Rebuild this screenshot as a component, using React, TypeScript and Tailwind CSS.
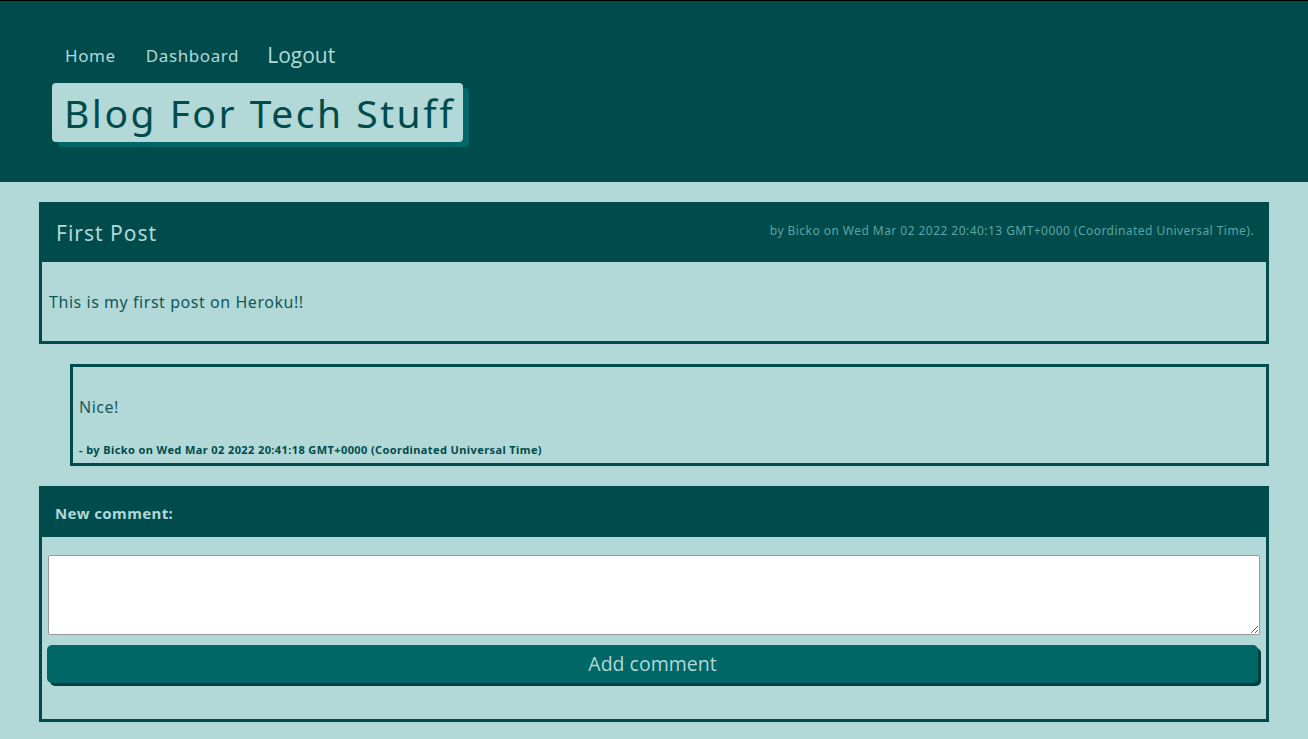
import React from "react";

const sans = "font-['Noto_Sans',sans-serif]";

function Header() {
    return (
        <header className="h-[182px] border-t border-black bg-[#004c4c] pl-[52px] pt-[40px]">
            <nav className={`flex items-end gap-[30px] pl-[13px] text-[17px] tracking-[0.6px] text-[#b2d8d8] ${sans}`}>
                <a href="#" className="leading-[27px]">Home</a>
                <a href="#" className="leading-[27px]">Dashboard</a>
                <a href="#" className="-ml-[2px] font-['Open_Sans',sans-serif] text-[21px] leading-[28px] tracking-normal">Logout</a>
            </nav>
            <div className="mt-[14px] inline-block rounded-[4px] bg-[#b2d8d8] pl-[12px] pr-[8px] shadow-[6px_5px_0_#006666]">
                <h1 className={`text-[39px] leading-[59px] tracking-[2.5px] text-[#004c4c] ${sans}`}>Blog For Tech Stuff</h1>
            </div>
        </header>
    );
}

function Post() {
    return (
        <section className="border-[3px] border-[#004c4c]">
            <div className="flex h-[57px] items-center justify-between bg-[#004c4c] pl-[14px] pr-[12px]">
                <h2 className={`text-[21px] tracking-[1px] text-[#b2d8d8] ${sans}`}>First Post</h2>
                <p className={`-mt-[6px] text-[12px] tracking-[0.45px] text-[#5fa3a3] ${sans}`}>
                    by Bicko on Wed Mar 02 2022 20:40:13 GMT+0000 (Coordinated Universal Time).
                </p>
            </div>
            <div className={`flex h-[79px] items-center px-[7px] text-[16px] tracking-[0.55px] text-[#0e5a5a] ${sans}`}>
                This is my first post on Heroku!!
            </div>
        </section>
    );
}

function Comment() {
    return (
        <div className={`ml-[31px] h-[102px] border-[3px] border-[#004c4c] px-[6px] pt-[28px] ${sans}`}>
            <p className="text-[16px] tracking-[0.5px] text-[#1d5b5b]">Nice!</p>
            <p className="mt-[23px] text-[11px] font-bold tracking-[0.4px] text-[#004c4c]">
                - by Bicko on Wed Mar 02 2022 20:41:18 GMT+0000 (Coordinated Universal Time)
            </p>
        </div>
    );
}

function NewComment() {
    return (
        <form className="h-[236px] border-[3px] border-[#004c4c]" onSubmit={e => e.preventDefault()}>
            <div className="flex h-[48px] items-center bg-[#004c4c] px-[13px]">
                <label className={`text-[15px] font-bold tracking-[0.4px] text-[#b2d8d8] ${sans}`}>New comment:</label>
            </div>
            <div className="px-[5px] pt-[18px]">
                <textarea className="ml-[1px] block h-[80px] w-[1212px] rounded-[2px] border border-[#999] bg-white" />
                <button className="mt-[10px] h-[38px] w-[1211px] rounded-[5px] bg-[#006666] font-['Open_Sans',sans-serif] text-[19.5px] text-[#b2d8d8] shadow-[3px_3px_0_#004040]">
                    Add comment
                </button>
            </div>
        </form>
    );
}

export default function App() {
    return (
        <div className="min-h-[739px] bg-[#b2d8d8]">
            <Header />
            <main className="flex flex-col gap-[20px] px-[39px] pt-[20px] pb-[18px]">
                <Post />
                <Comment />
                <NewComment />
            </main>
        </div>
    );
}
